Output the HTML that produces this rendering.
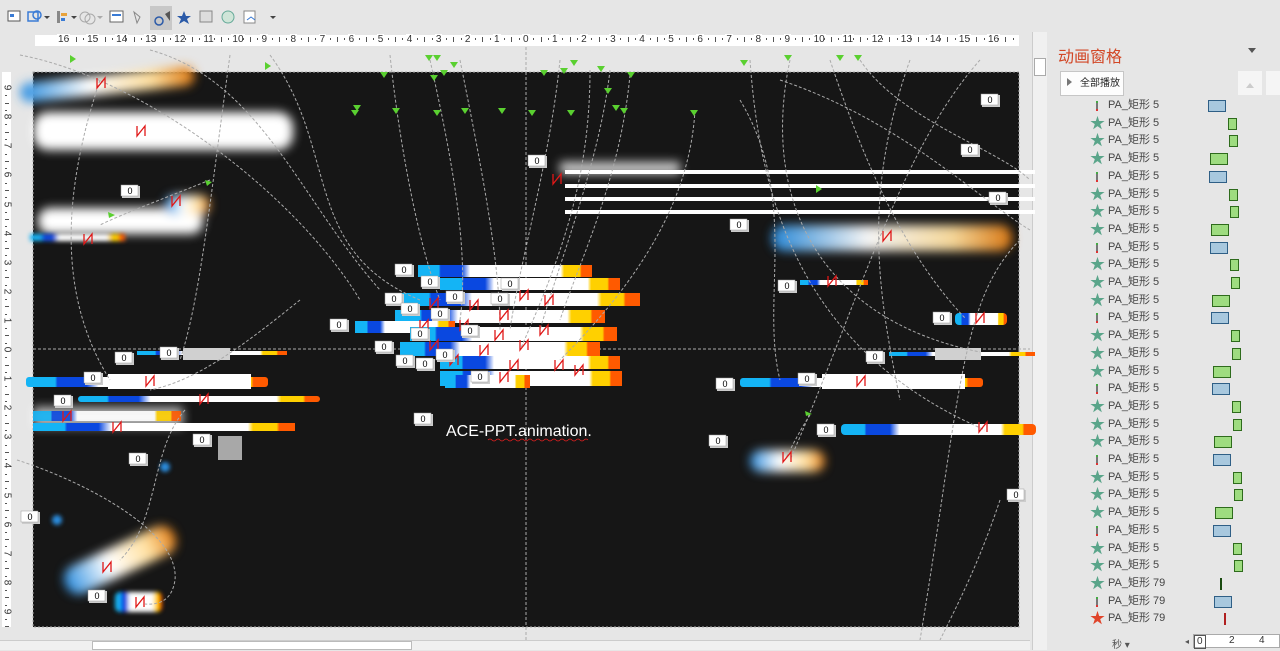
<!DOCTYPE html>
<html><head><meta charset="utf-8"><style>
*{margin:0;padding:0;box-sizing:border-box}
body{width:1280px;height:650px;overflow:hidden;background:#e6e6e6;font-family:"Liberation Sans","Noto Sans CJK SC",sans-serif;position:relative}
.abs{position:absolute}
.row{position:absolute;left:1108px;font-size:11px;color:#444;height:17px;line-height:17px}
.star{position:absolute;left:1090px;font-size:15px;color:#5aa58a;line-height:17px;height:17px}
.bar{position:absolute;height:12px;border:1px solid #2e6b1c;background:#9edc80}
.bb{border-color:#2f5f86;background:#a8c8de}
</style></head><body>
<div class="abs" style="left:0;top:0;width:1280px;height:35px;background:#e6e6e6"></div>
<svg class="abs" style="left:0;top:0" width="290" height="32">
<rect x="8" y="11" width="12" height="10" fill="#fff" stroke="#555"/><rect x="10" y="14" width="4" height="3" fill="#3a7bd5"/>
<rect x="28" y="12" width="10" height="9" fill="none" stroke="#3a7bd5" stroke-width="1.5"/><circle cx="37" cy="15" r="4" fill="none" stroke="#3a7bd5" stroke-width="1.5"/>
<path d="M44 16l3 3 3-3z" fill="#444"/>
<rect x="57" y="11" width="3" height="12" fill="#888"/><rect x="61" y="13" width="6" height="3" fill="#e8a23a"/><rect x="61" y="18" width="4" height="3" fill="#3a7bd5"/>
<path d="M71 16l3 3 3-3z" fill="#444"/>
<circle cx="85" cy="17" r="5" fill="none" stroke="#aaa"/><circle cx="90" cy="19" r="5" fill="none" stroke="#aaa"/><path d="M97 16l3 3 3-3z" fill="#aaa"/>
<rect x="110" y="11" width="13" height="11" fill="#fff" stroke="#666"/><rect x="112" y="14" width="9" height="2" fill="#3a7bd5"/>
<path d="M134 12l6 5-3 6z" fill="none" stroke="#888"/>
<rect x="150" y="6" width="22" height="24" fill="#c8c8c8"/><circle cx="159" cy="21" r="4" fill="none" stroke="#2b5aa8" stroke-width="1.5"/><path d="M165 14l5-3v10z" fill="#555"/>
<path d="M184 11l2 5h5l-4 3 2 5-5-3-5 3 2-5-4-3h5z" fill="#2b5aa8"/>
<rect x="200" y="11" width="12" height="11" fill="#ddd" stroke="#888"/>
<circle cx="228" cy="17" r="6" fill="#cfe5d8" stroke="#6a9"/>
<rect x="244" y="11" width="11" height="12" fill="#fff" stroke="#888"/><path d="M247 20l4-3 4 3" stroke="#3a7bd5" fill="none"/>
<path d="M270 16l3 3 3-3z" fill="#444"/>
</svg>
<div class="abs" style="left:35px;top:35px;width:984px;height:11px;background:#fff"></div>
<div id="rt" class="abs" style="left:0;top:33px;width:1030px;height:14px;font-size:10px;color:#333"></div>
<div class="abs" style="left:2px;top:72px;width:9px;height:555px;background:#fff"></div>
<div id="rl" class="abs" style="left:0;top:0;width:12px;height:650px;font-size:10px;color:#333"></div>
<div class="abs" style="left:1032px;top:32px;width:15px;height:618px;background:#f0f0f0;border-left:1px solid #ccc"></div>
<div class="abs" style="left:1034px;top:58px;width:12px;height:18px;background:#fff;border:1px solid #aaa"></div>
<div class="abs" style="left:0;top:640px;width:1030px;height:10px;background:#f0f0f0;border-top:1px solid #ccc"></div>
<div class="abs" style="left:92px;top:641px;width:320px;height:9px;background:#fff;border:1px solid #bbb"></div>
<svg class="abs" style="left:0;top:0" width="1040" height="640">
<defs>
<linearGradient id="g" x1="0" x2="1"><stop offset="0" stop-color="#14b4f5"/><stop offset=".12" stop-color="#14b4f5"/><stop offset=".13" stop-color="#0a48e0"/><stop offset=".25" stop-color="#0a48e0"/><stop offset=".3" stop-color="#fff"/><stop offset=".82" stop-color="#fff"/><stop offset=".84" stop-color="#ffd000"/><stop offset=".93" stop-color="#ffd000"/><stop offset=".94" stop-color="#ff5a00"/><stop offset="1" stop-color="#ff5a00"/></linearGradient>
<linearGradient id="g2" x1="0" x2="1"><stop offset="0" stop-color="#2a8ee0"/><stop offset=".4" stop-color="#fff"/><stop offset=".75" stop-color="#ffe0a0"/><stop offset="1" stop-color="#e07a10"/></linearGradient>
<filter id="b" x="-30%" y="-100%" width="160%" height="300%"><feGaussianBlur stdDeviation="5"/></filter>
<filter id="b2" x="-30%" y="-100%" width="160%" height="300%"><feGaussianBlur stdDeviation="2"/></filter>
</defs>
<rect x="33" y="72" width="986" height="555" fill="#161616"/>
<rect x="33" y="72" width="986" height="555" fill="none" stroke="#aaa" stroke-dasharray="2,2"/>
<line x1="33" y1="349" x2="1030" y2="349" stroke="#aaa" stroke-dasharray="3,2"/>
<line x1="526" y1="47" x2="526" y2="640" stroke="#aaa" stroke-dasharray="3,2"/>
<g filter="url(#b)">
<rect x="20" y="75" width="175" height="20" rx="10" fill="url(#g2)" transform="rotate(-6 100 85)"/>
<rect x="33" y="112" width="260" height="38" rx="15" fill="#fff"/>
<rect x="38" y="208" width="165" height="26" rx="12" fill="#fff"/>
<rect x="772" y="225" width="240" height="26" rx="12" fill="url(#g2)" opacity=".95"/>
<rect x="60" y="545" width="120" height="30" rx="14" fill="url(#g2)" transform="rotate(-25 120 560)"/>
<rect x="750" y="450" width="75" height="22" rx="11" fill="url(#g2)"/>
<rect x="165" y="195" width="45" height="20" rx="10" fill="url(#g2)"/>
<rect x="560" y="162" width="120" height="12" fill="#fff" opacity=".8"/>
<rect x="33" y="407" width="150" height="20" fill="#fff" opacity=".7"/>
</g>
<g fill="#fff">
<rect x="565" y="170" width="470" height="4"/><rect x="565" y="184" width="470" height="4"/><rect x="565" y="197" width="470" height="4"/><rect x="565" y="210" width="470" height="4"/>
</g>
<g filter="url(#b2)"><rect x="30" y="234" width="95" height="7" fill="url(#g)"/><rect x="115" y="592" width="47" height="20" rx="5" fill="url(#g)"/><circle cx="165" cy="467" r="5" fill="#2a8ee0"/><circle cx="57" cy="520" r="5" fill="#2a8ee0"/></g>
<rect x="137" y="351" width="150" height="4" fill="url(#g)"/>
<rect x="183" y="348" width="47" height="12" fill="#d0d0d0"/>
<rect x="26" y="377" width="242" height="10" rx="3" fill="url(#g)"/>
<rect x="108" y="374" width="143" height="15" fill="#fff"/>
<rect x="78" y="396" width="242" height="6" rx="3" fill="url(#g)"/>
<rect x="33" y="411" width="148" height="10" fill="url(#g)" opacity=".9"/>
<rect x="33" y="423" width="262" height="8" fill="url(#g)"/>
<rect x="218" y="436" width="24" height="24" fill="#a8a8a8"/>
<rect x="800" y="280" width="68" height="5" fill="url(#g)"/>
<rect x="955" y="313" width="52" height="12" rx="4" fill="url(#g)"/>
<rect x="889" y="352" width="146" height="4" fill="url(#g)"/>
<rect x="935" y="348" width="46" height="12" fill="#d0d0d0"/>
<rect x="740" y="378" width="243" height="9" rx="3" fill="url(#g)"/>
<rect x="822" y="374" width="143" height="15" fill="#fff"/>
<rect x="841" y="424" width="195" height="11" rx="4" fill="url(#g)"/>
<g>
<rect x="418" y="265" width="174" height="12" fill="url(#g)"/>
<rect x="440" y="278" width="180" height="12" fill="url(#g)"/>
<rect x="400" y="293" width="240" height="13" fill="url(#g)"/>
<rect x="395" y="310" width="210" height="13" fill="url(#g)"/>
<rect x="355" y="321" width="100" height="12" fill="url(#g)"/>
<rect x="410" y="327" width="207" height="14" fill="url(#g)"/>
<rect x="400" y="342" width="200" height="14" fill="url(#g)"/>
<rect x="440" y="356" width="180" height="13" fill="url(#g)"/>
<rect x="440" y="371" width="182" height="15" fill="url(#g)"/>
<rect x="445" y="375" width="85" height="13" fill="url(#g)"/>
</g>
<g fill="none" stroke="#aaa" stroke-dasharray="3,2" stroke-width="1">
<path d="M20 55 C150 80 300 200 360 300"/><path d="M150 50 C260 80 300 200 380 290"/><path d="M270 55 C340 150 300 250 420 300"/>
<path d="M390 55 C400 150 420 250 440 300"/><path d="M430 60 C450 150 470 250 460 320"/><path d="M460 60 C480 160 500 260 500 330"/>
<path d="M560 60 C550 160 520 260 510 330"/><path d="M610 70 C600 160 560 260 540 330"/><path d="M630 75 C620 180 580 260 560 320"/>
<path d="M695 110 C690 200 640 280 560 360"/><path d="M590 70 C590 180 560 260 520 350"/>
<path d="M230 55 C210 200 200 300 180 360"/><path d="M100 80 C60 200 60 300 110 380"/>
<path d="M750 60 C760 200 800 350 985 430"/><path d="M790 60 C760 200 820 320 980 352"/><path d="M830 60 C860 150 900 250 965 318"/>
<path d="M860 60 C900 120 1000 150 1030 180"/><path d="M780 80 C900 120 980 200 1030 230"/><path d="M910 60 C860 200 880 300 900 400"/>
<path d="M980 60 C900 150 860 300 790 460"/><path d="M1020 240 C960 300 960 400 920 640"/><path d="M740 100 C800 200 760 300 780 380"/>
<path d="M17 460 C80 480 180 530 175 580 C172 600 160 605 145 604"/><path d="M300 300 C250 340 200 380 150 390"/>
<path d="M210 180 C160 200 120 215 100 225"/><path d="M810 415 C800 430 790 450 785 460"/>
<path d="M1000 500 C980 560 960 600 940 640"/><path d="M185 410 C150 450 160 520 120 560"/>
</g>
<g fill="#5ad030">
<path d="M380 72h8l-4 6z"/><path d="M425 55h8l-4 6z"/><path d="M433 55h8l-4 6z"/><path d="M450 62h8l-4 6z"/><path d="M430 75h8l-4 6z"/><path d="M440 70h8l-4 6z"/><path d="M570 60h8l-4 6z"/><path d="M560 68h8l-4 6z"/><path d="M540 70h8l-4 6z"/><path d="M597 66h8l-4 6z"/><path d="M627 72h8l-4 6z"/><path d="M604 88h8l-4 6z"/><path d="M353 105h8l-4 6z"/><path d="M351 110h8l-4 6z"/><path d="M392 108h8l-4 6z"/><path d="M433 110h8l-4 6z"/><path d="M461 108h8l-4 6z"/><path d="M498 108h8l-4 6z"/><path d="M528 110h8l-4 6z"/><path d="M567 110h8l-4 6z"/><path d="M612 105h8l-4 6z"/><path d="M620 108h8l-4 6z"/><path d="M690 110h8l-4 6z"/><path d="M740 60h8l-4 6z"/><path d="M784 55h8l-4 6z"/><path d="M836 55h8l-4 6z"/><path d="M854 55h8l-4 6z"/><path d="M70 55l6 4-6 4z"/><path d="M265 62l6 4-6 4z"/><path d="M205 180l7 2-5 4z"/><path d="M108 212l7 3-6 3z"/><path d="M816 185l6 4-6 4z"/><path d="M805 411l7 3-6 2z"/>
</g>
<g fill="none" stroke="#e01818" stroke-width="1.3">
<path d="M97 78v10l8-10v10"/><path d="M137 126v10l8-10v10"/><path d="M84 234v10l8-10v10"/><path d="M146 376v10l8-10v10"/><path d="M200 394v10l8-10v10"/><path d="M63 411v10l8-10v10"/><path d="M113 422v10l8-10v10"/><path d="M136 597v10l8-10v10"/><path d="M103 562v10l8-10v10"/><path d="M883 231v10l8-10v10"/><path d="M828 276v10l8-10v10"/><path d="M976 313v10l8-10v10"/><path d="M857 376v10l8-10v10"/><path d="M979 422v10l8-10v10"/><path d="M783 452v10l8-10v10"/><path d="M172 196v10l8-10v10"/><path d="M553 174v10l8-10v10"/>
<path d="M430 298v10l8-10v10"/><path d="M470 300v10l8-10v10"/><path d="M500 310v10l8-10v10"/><path d="M520 290v10l8-10v10"/><path d="M545 295v10l8-10v10"/><path d="M460 320v10l8-10v10"/><path d="M495 330v10l8-10v10"/><path d="M520 340v10l8-10v10"/><path d="M430 340v10l8-10v10"/><path d="M450 355v10l8-10v10"/><path d="M480 345v10l8-10v10"/><path d="M510 360v10l8-10v10"/><path d="M555 360v10l8-10v10"/><path d="M575 365v10l8-10v10"/><path d="M420 320v10l8-10v10"/><path d="M540 325v10l8-10v10"/><path d="M500 372v10l8-10v10"/>
</g>
<g font-family="Liberation Sans" font-size="9" text-anchor="middle"><g id="lbl"></g></g>
<text x="446" y="436" fill="#fff" font-family="Liberation Sans" font-size="16">ACE-PPT.animation.</text>
<path d="M488 440q2-2 4 0t4 0 4 0 4 0 4 0 4 0 4 0 4 0 4 0 4 0 4 0 4 0 4 0 4 0 4 0 4 0 4 0 4 0 4 0 4 0 4 0 4 0 4 0 4 0 4 0" stroke="#e02020" fill="none" stroke-width=".8"/>
</svg>
<div class="abs" style="left:1048px;top:32px;width:232px;height:618px;background:#e6e6e6"></div>
<div class="abs" style="left:1058px;top:43px;font-size:16px;color:#d24726">动画窗格</div>
<div class="abs" style="left:1248px;top:48px;border:4px solid transparent;border-top:5px solid #555"></div>
<div class="abs" style="left:1060px;top:71px;width:64px;height:25px;background:#fdfdfd;border:1px solid #c6c6c6;font-size:10px;line-height:23px;padding-left:19px;color:#222">全部播放</div>
<div class="abs" style="left:1067px;top:78px;border:4px solid transparent;border-left:5px solid #777"></div>
<div class="abs" style="left:1238px;top:71px;width:24px;height:24px;background:#f5f5f5"></div>
<div class="abs" style="left:1246px;top:79px;border:4px solid transparent;border-bottom:5px solid #ccc"></div>
<div class="abs" style="left:1266px;top:71px;width:14px;height:24px;background:#f5f5f5"></div>
<div id="list"></div>
<div class="abs" style="left:1112px;top:636px;font-size:10px;color:#555">秒 ▾</div>
<div class="abs" style="left:1185px;top:637px;font-size:8px;color:#555">◂</div>
<div class="abs" style="left:1193px;top:634px;width:87px;height:14px;border:1px solid #aaa;background:#fff;font-size:10px;color:#333;line-height:12px"><span style="display:inline-block;border:1px solid #555;padding:0 2px">0</span><span style="position:absolute;left:35px">2</span><span style="position:absolute;left:65px">4</span></div>
<script>
var rt=document.getElementById('rt'),h='';
for(var i=-16;i<=16;i++){var x=526+i*29.06;h+='<span style="position:absolute;left:'+(x-4)+'px;top:1px;background:#fff;padding:0 1px">'+Math.abs(i)+'</span>';
for(var k=1;k<4;k++){var xx=x+k*7.26;if(xx<1019)h+='<span style="position:absolute;left:'+xx+'px;top:'+(k==2?4:5)+'px;width:1px;height:'+(k==2?5:2)+'px;background:#555"></span>';}}
rt.innerHTML=h;
var rl=document.getElementById('rl');h='';
for(i=-9;i<=9;i++){var y=350+i*29.1;h+='<span style="position:absolute;left:2px;top:'+(y-6)+'px;transform:rotate(90deg);display:block;width:10px;text-align:center">'+Math.abs(i)+'</span>';
for(k=1;k<4;k++){var yy=y+k*7.27;if(yy<627)h+='<span style="position:absolute;left:5px;top:'+yy+'px;width:'+(k==2?4:2)+'px;height:1px;background:#555"></span>';}}
rl.innerHTML=h;
var L=document.getElementById('list');h='';
for(i=0;i<30;i++){var y=97+i*17.7,m=i%4,name=i>=27?'PA_矩形 79':'PA_矩形 5',off=Math.floor(i/4)*0.9;
var isStar=(i>0&&m!=0&&i<27)||i==27||i==29;
if(isStar)h+='<div class="star" style="top:'+y+'px;'+(i==29?'color:#e0442a':'')+'">★</div>';
else h+='<div class="abs" style="left:1096px;top:'+(y+4)+'px;width:2px;height:10px;background:#777;border-top:2px solid #4a4;border-bottom:2px solid #d33"></div>';
h+='<div class="row" style="top:'+y+'px">'+name+'</div>';
if(i==27)h+='<div class="abs" style="left:1220px;top:'+(y+3)+'px;width:2px;height:12px;background:#1a4a10"></div>';
else if(i==29)h+='<div class="abs" style="left:1224px;top:'+(y+3)+'px;width:2px;height:12px;background:#b02020"></div>';
else if(i==28)h+='<div class="bar bb" style="left:1214px;top:'+(y+3)+'px;width:18px"></div>';
else if(m==0)h+='<div class="bar bb" style="left:'+(1208+off)+'px;top:'+(y+3)+'px;width:18px"></div>';
else if(m==3)h+='<div class="bar" style="left:'+(1210+off)+'px;top:'+(y+3)+'px;width:18px"></div>';
else h+='<div class="bar" style="left:'+(1228+off+(m==2?1:0))+'px;top:'+(y+3)+'px;width:9px"></div>';}
L.innerHTML=h;
var lb=[[990,101],[970,151],[537,162],[130,192],[998,199],[739,226],[404,271],[787,287],[394,300],[942,319],[339,326],[124,359],[169,354],[384,348],[875,358],[93,379],[807,380],[725,385],[63,402],[202,441],[423,420],[718,442],[826,431],[138,460],[30,518],[1016,496],[97,597],[430,283],[455,298],[410,310],[420,335],[480,378],[445,356],[405,362],[425,365],[470,332],[440,315],[500,300],[510,285]];
var s='';lb.forEach(function(p){s+='<rect x="'+(p[0]-8)+'" y="'+(p[1]-6)+'" width="18" height="12" fill="#ccc"/><rect x="'+(p[0]-9)+'" y="'+(p[1]-7)+'" width="17" height="11" fill="#fff" stroke="#999" stroke-width=".5"/><text x="'+p[0]+'" y="'+(p[1]+2)+'">0</text>';});
document.getElementById('lbl').innerHTML=s;
</script>
</body></html>
